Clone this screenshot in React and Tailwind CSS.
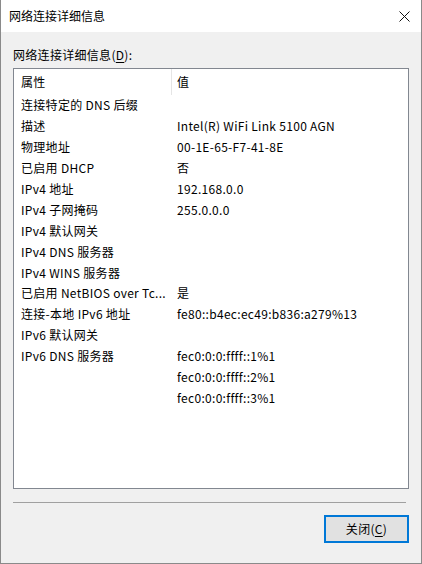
import React from 'react';

const rows = [
  ['连接特定的 DNS 后缀', ''],
  ['描述', 'Intel(R) WiFi Link 5100 AGN'],
  ['物理地址', '00-1E-65-F7-41-8E'],
  ['已启用 DHCP', '否'],
  ['IPv4 地址', '192.168.0.0'],
  ['IPv4 子网掩码', '255.0.0.0'],
  ['IPv4 默认网关', ''],
  ['IPv4 DNS 服务器', ''],
  ['IPv4 WINS 服务器', ''],
  ['已启用 NetBIOS over Tc...', '是'],
  ['连接-本地 IPv6 地址', 'fe80::b4ec:ec49:b836:a279%13'],
  ['IPv6 默认网关', ''],
  ['IPv6 DNS 服务器', 'fec0:0:0:ffff::1%1'],
  ['', 'fec0:0:0:ffff::2%1'],
  ['', 'fec0:0:0:ffff::3%1'],
];

const font = { fontFamily: '"Noto Sans CJK SC", "Noto Sans", sans-serif' };

const App = () => {
  return (
    <div
      className="w-[422px] h-[564px] flex flex-col bg-[#f0f0f0] border border-t-0 border-[#8a8a8a] text-[12px] tracking-[0.3px] text-black"
      style={font}
    >
      {/* Title bar */}
      <div className="h-[32px] bg-white flex items-center justify-between pl-[8px] pr-[10px] shrink-0">
        <span className="leading-[16px] tracking-normal">网络连接详细信息</span>
        <svg width="11" height="11" viewBox="0 0 11 11" className="mr-[1px]">
          <path d="M0.5 0.5 L10.5 10.5 M10.5 0.5 L0.5 10.5" stroke="#111" strokeWidth="1" />
        </svg>
      </div>

      {/* Body */}
      <div className="flex-1 flex flex-col px-[12px] pt-[15px]">
        <div className="h-[16px] leading-[16px] mb-[5px]">
          网络连接详细信息(<span className="underline underline-offset-2">D</span>):
        </div>

        {/* List */}
        <div className="h-[421px] w-[396px] border border-[#828790] bg-white flex flex-col">
          <div className="h-[26px] flex items-stretch shrink-0">
            <div className="w-[157px] pl-[7px] flex items-center">属性</div>
            <div className="w-px bg-[#e5e5e5]"></div>
            <div className="pl-[5px] flex items-center">值</div>
          </div>
          {rows.map((r, i) => (
            <div key={i} className="h-[20.9px] flex items-center shrink-0">
              <div className="w-[163px] pl-[7px] whitespace-nowrap overflow-hidden">{r[0]}</div>
              <div className="whitespace-nowrap">{r[1]}</div>
            </div>
          ))}
        </div>

        {/* Separator */}
        <div className="mt-[13px] w-[393px] h-px bg-[#a0a0a0]"></div>

        {/* Footer */}
        <div className="flex justify-end mt-[12px]">
          <button className="w-[85px] h-[28px] border-2 border-[#0078d7] bg-[#e1e1e1] flex items-center justify-center">
            <span className="leading-[16px]">
              关闭(<span className="underline underline-offset-2">C</span>)
            </span>
          </button>
        </div>
      </div>
    </div>
  );
};

export default App;
